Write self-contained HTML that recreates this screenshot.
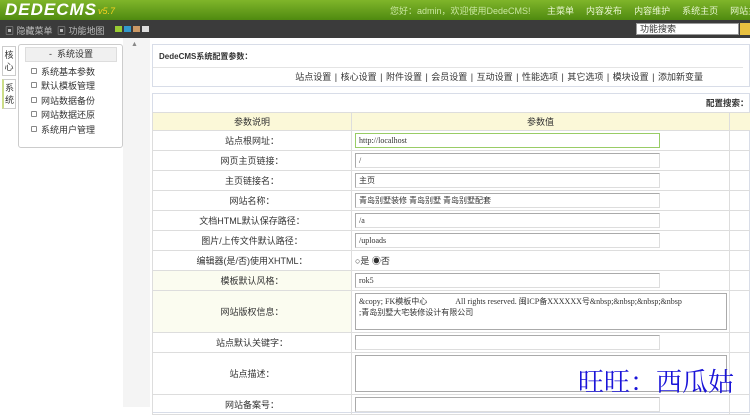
<!DOCTYPE html>
<html><head><meta charset="utf-8"><style>
*{margin:0;padding:0;box-sizing:border-box}
body{width:750px;height:407px;overflow:hidden;background:#fff;font-family:"Liberation Sans","Noto Sans CJK SC",sans-serif;font-size:9px;color:#333;position:relative}
.a{position:absolute}
#hd{left:0;top:0;width:750px;height:20px;background:linear-gradient(#7fb52a,#4f8a10)}
#logo{left:5px;top:0px;font:italic bold 17px "Liberation Sans",sans-serif;color:#fff;letter-spacing:1px}
#v{left:98px;top:6px;font:italic 9px "Liberation Sans";color:#f5d020}
#tl{left:390px;top:4px;color:#c9e6a0;font-size:9px;white-space:nowrap;word-spacing:2px}
#tl b{font-weight:normal;color:#e8f6d0;margin-left:12px}
#bar{left:0;top:20px;width:750px;height:18px;background:#3b3b3b}
#bar span{color:#bbb;font-size:9px;position:absolute;top:4px}
.sq{position:absolute;top:6px;width:7px;height:6px}
#srch{left:636px;top:23px;width:103px;height:12px;background:#fff;border:1px solid #999;font-size:9px;padding-left:3px;line-height:10px}
#side{left:0;top:38px;width:140px;height:369px;background:#fff}
.tab{position:absolute;left:2px;width:14px;border:1px solid #ccc;font-size:9px;text-align:center;line-height:12px;padding:2px 0}
#menu{left:18px;top:44px;width:105px;height:104px;background:#fff;border:1px solid #ccc;border-radius:3px}
#mh{left:6px;top:2px;width:92px;height:15px;background:#f0f0f0;border:1px solid #ddd;text-align:center;line-height:13px}
.mi{position:absolute;left:12px;font-size:9px;line-height:13px;white-space:nowrap}
.mi:before{content:"";display:inline-block;width:4px;height:4px;border:1px solid #888;border-radius:1px;margin-right:4px;vertical-align:1px}
#gut{left:123px;top:38px;width:27px;height:369px;background:#f4f4f4}
#box1{left:152px;top:44px;width:598px;height:43px;border:1px solid #d8dde8;background:#fff}
#box1 .t{position:absolute;left:6px;top:6px;font-size:8px;font-weight:bold;color:#333}
#box1 .n{position:absolute;left:0;top:22px;width:590px;height:20px;border-top:1px solid #e4e4e4;text-align:right;padding-right:40px;line-height:19px;font-size:9px;word-spacing:1px}
#box2{left:152px;top:93px;width:598px;height:320px;border:1px solid #d8dde8;background:#fff}
#cfg{left:706px;top:97px;font-size:8.5px;font-weight:bold}
table{position:absolute;left:152px;top:112px;border-collapse:collapse;width:600px}
td{border:1px solid #ddd;font-size:9px;height:20px;text-align:center;padding:0}
td.v{text-align:left;padding-left:3px}
tr.h td{background:#fbf8d8;height:18px}
tr.y td.l{background:#fbfcf0}
.in{display:block;height:15px;width:305px;border:1px solid #aaa;border-bottom-color:#ddd;border-right-color:#ddd;font:8px "Liberation Serif","Noto Sans CJK SC",serif;line-height:13px;padding-left:3px;text-align:left;background:#fff}
.ta{display:block;width:372px;border:1px solid #aaa;font:8px "Liberation Serif","Noto Sans CJK SC",serif;padding:2px 3px;line-height:11px;background:#fff;text-align:left;white-space:pre}
#wm{left:578px;top:362px;font:26px "Noto Serif CJK SC",serif;color:#1a14d8}
</style></head><body>
<div class="a" id="hd"></div>
<div class="a" id="logo">DEDECMS</div>
<div class="a" id="v">v5.7</div>
<div class="a" id="tl">您好：admin，欢迎使用DedeCMS! <b>主菜单</b><b>内容发布</b><b>内容维护</b><b>系统主页</b><b>网站主页</b></div>
<div class="a" id="bar"><span style="left:5px">▣ 隐藏菜单</span><span style="left:57px">▣ 功能地图</span>
<i class="sq" style="left:115px;background:#9c3"></i><i class="sq" style="left:124px;background:#39c"></i><i class="sq" style="left:133px;background:#c96"></i><i class="sq" style="left:142px;background:#ddd"></i></div>
<div class="a" id="srch">功能搜索</div>
<div class="a" style="left:740px;top:23px;width:10px;height:12px;background:#e8c040"></div>
<div class="a" id="side"></div>
<div class="tab" style="top:46px;background:#fff">核<br>心</div>
<div class="tab" style="top:79px;background:#fff;border-left:2px solid #cd8">系<br>统</div>
<div class="a" id="menu">
<div class="a" id="mh">- &nbsp;系统设置</div>
<div class="mi" style="top:21px">系统基本参数</div>
<div class="mi" style="top:35px">默认模板管理</div>
<div class="mi" style="top:50px">网站数据备份</div>
<div class="mi" style="top:64px">网站数据还原</div>
<div class="mi" style="top:79px">系统用户管理</div>
</div>
<div class="a" id="gut"><span style="position:absolute;left:8px;top:3px;color:#888;font-size:7px">▲</span></div>
<div class="a" id="box1"><div class="t">DedeCMS系统配置参数：</div><div class="n">站点设置 | 核心设置 | 附件设置 | 会员设置 | 互动设置 | 性能选项 | 其它选项 | 模块设置 | 添加新变量</div></div>
<div class="a" id="box2"></div>
<div class="a" id="cfg">配置搜索：</div>
<table>
<tr class="h"><td style="width:199px">参数说明</td><td style="width:378px">参数值</td><td></td></tr>
<tr><td class="l">站点根网址：</td><td class="v"><span class="in" style="border-color:#9c6">http://localhost</span></td><td></td></tr>
<tr><td class="l">网页主页链接：</td><td class="v"><span class="in">/</span></td><td></td></tr>
<tr><td class="l">主页链接名：</td><td class="v"><span class="in">主页</span></td><td></td></tr>
<tr><td class="l">网站名称：</td><td class="v"><span class="in">青岛别墅装修 青岛别墅 青岛别墅配套</span></td><td></td></tr>
<tr><td class="l">文档HTML默认保存路径：</td><td class="v"><span class="in">/a</span></td><td></td></tr>
<tr><td class="l">图片/上传文件默认路径：</td><td class="v"><span class="in">/uploads</span></td><td></td></tr>
<tr><td class="l">编辑器(是/否)使用XHTML：</td><td class="v">○是 ◉否</td><td></td></tr>
<tr class="y"><td class="l">模板默认风格：</td><td class="v"><span class="in">rok5</span></td><td></td></tr>
<tr class="y"><td class="l" style="height:42px">网站版权信息：</td><td class="v"><span class="ta" style="height:37px">&amp;copy; FK模板中心              All rights reserved. 闽ICP备XXXXXX号&amp;nbsp;&amp;nbsp;&amp;nbsp;&amp;nbsp
;青岛别墅大宅装修设计有限公司</span></td><td></td></tr>
<tr><td class="l">站点默认关键字：</td><td class="v"><span class="in"></span></td><td></td></tr>
<tr><td class="l" style="height:42px">站点描述：</td><td class="v"><span class="ta" style="height:37px"></span></td><td></td></tr>
<tr><td class="l">网站备案号：</td><td class="v"><span class="in"></span></td><td></td></tr>
</table>
<div class="a" id="wm">旺旺：西瓜姑</div>
</body></html>
